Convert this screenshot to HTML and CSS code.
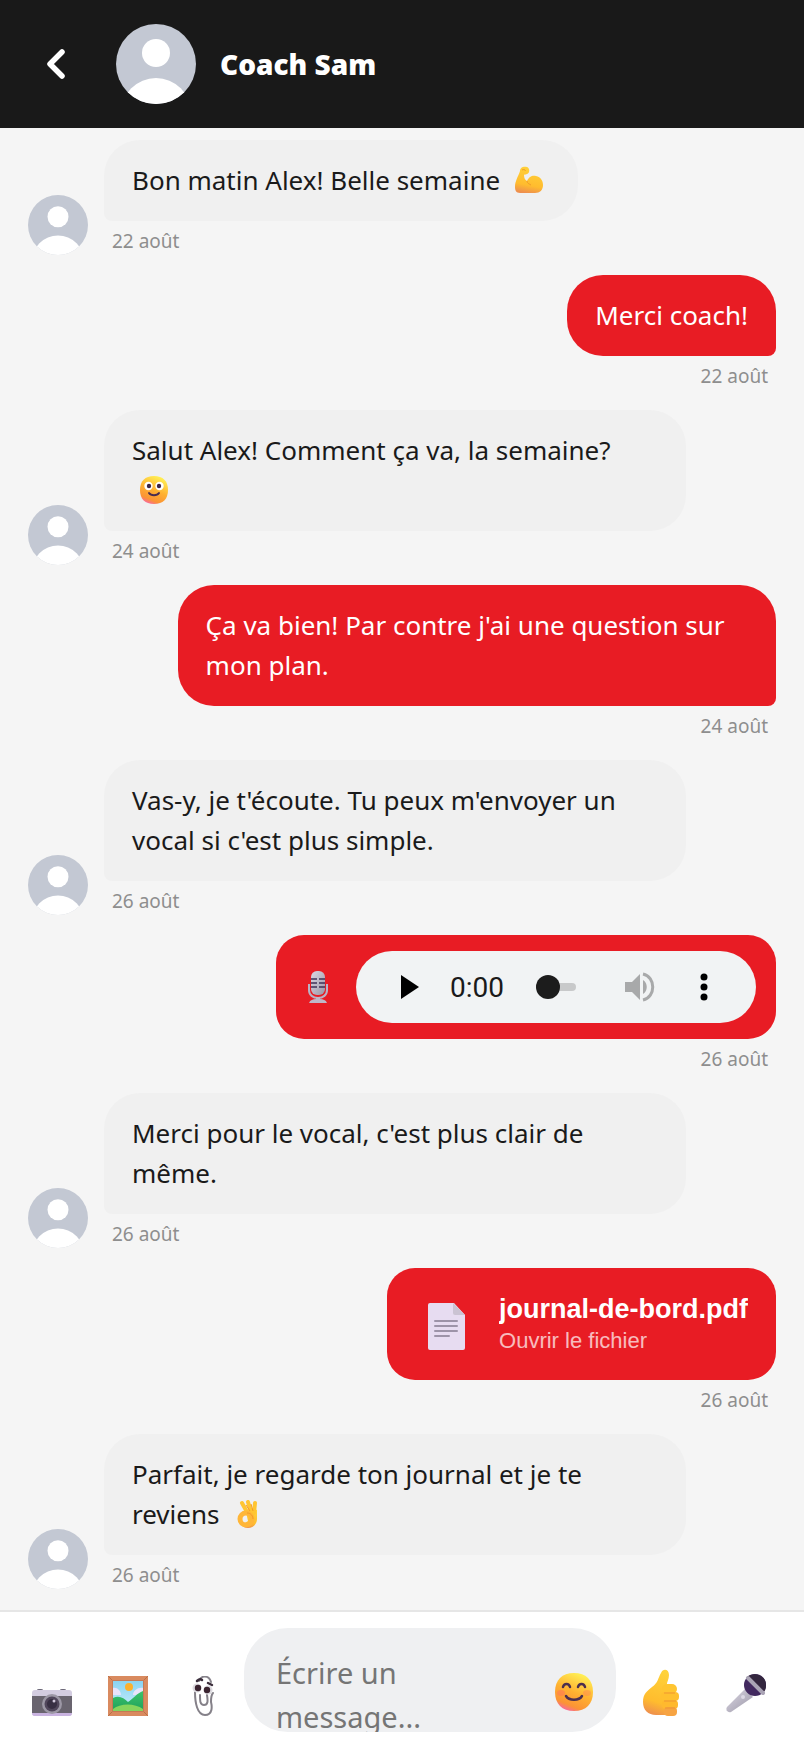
FILE: index.html
```html
<!DOCTYPE html>
<html lang="fr">
<head>
  <meta charset="UTF-8" />
  <meta name="viewport" content="width=device-width, initial-scale=1" />
  <title>Coach Sam</title>
  <link rel="stylesheet" href="styles.css">
</head>
<body>

  <!-- shared icons -->
  <svg class="sprite" width="0" height="0" aria-hidden="true">
    <defs>
      <clipPath id="avatar-clip"><circle cx="40" cy="40" r="40" /></clipPath>
      <linearGradient id="skin" x1="0.6" y1="0" x2="0.4" y2="1">
        <stop offset="0" stop-color="#ffd23a" />
        <stop offset="0.7" stop-color="#ffbc2e" />
        <stop offset="1" stop-color="#ee8f4e" />
      </linearGradient>
      <linearGradient id="face" x1="0.75" y1="0.05" x2="0.35" y2="1">
        <stop offset="0" stop-color="#fff055" />
        <stop offset="0.5" stop-color="#ffb131" />
        <stop offset="0.85" stop-color="#fb9335" />
        <stop offset="1" stop-color="#f96a9a" />
      </linearGradient>
      <linearGradient id="metal" x1="0" y1="0" x2="1" y2="1">
        <stop offset="0" stop-color="#dcd8e4" />
        <stop offset="1" stop-color="#9a96a6" />
      </linearGradient>
      <linearGradient id="sky" x1="0" y1="0" x2="0" y2="1">
        <stop offset="0" stop-color="#8ad4f2" />
        <stop offset="1" stop-color="#c9eefc" />
      </linearGradient>
      <linearGradient id="hill" x1="0" y1="0" x2="0" y2="1">
        <stop offset="0" stop-color="#3cc46a" />
        <stop offset="1" stop-color="#1fa05c" />
      </linearGradient>
      <symbol id="avatar" viewBox="0 0 80 80">
        <g clip-path="url(#avatar-clip)">
          <rect width="80" height="80" fill="#c3c8d3" />
          <circle cx="40" cy="29" r="14" fill="#fff" />
          <circle cx="40" cy="89" r="35" fill="#fff" />
        </g>
      </symbol>
    </defs>
  </svg>

  <header class="chat-header">
    <button class="back" type="button" aria-label="Retour">
      <svg width="32" height="32" viewBox="0 0 32 32"><path d="M22 4 10 16l12 12" fill="none" stroke="#fff" stroke-width="5.5" stroke-linecap="round" stroke-linejoin="round" /></svg>
    </button>
    <svg class="header-avatar"><use href="#avatar" /></svg>
    <h1>Coach Sam</h1>
  </header>

  <main class="messages">

    <div class="row">
      <svg class="avatar"><use href="#avatar" /></svg>
      <div class="content">
        <p class="bubble">Bon matin Alex! Belle semaine <svg class="emoji" viewBox="0 0 28 28"><path d="M5 5C5 1 9 0 12 1c3 1 3 6 0 7-2 1-2 0-3 1 0 3 1 5 3 6 2-5 6-6 9-5 5 1 7 5 7 9 0 5-3 8-8 8H5c-4 0-5-3-5-6C0 15 3 11 5 5z" fill="url(#skin)" /><path d="M7 4c2-1 4 0 3 1M12 15c0 2 2 3 4 4" fill="none" stroke="#f09a2c" /></svg></p>
        <time class="date">22 août</time>
      </div>
    </div>

    <div class="row mine">
      <div class="content">
        <p class="bubble">Merci coach!</p>
        <time class="date">22 août</time>
      </div>
    </div>

    <div class="row">
      <svg class="avatar"><use href="#avatar" /></svg>
      <div class="content">
        <p class="bubble">Salut Alex! Comment ça va, la semaine? <svg class="emoji" viewBox="0 0 28 28"><path d="M14 0c9 0 14 5 14 14s-5 14-14 14S0 23 0 14 5 0 14 0z" fill="url(#face)" /><circle cx="8.5" cy="10" r="4.2" fill="#fff" /><circle cx="19.5" cy="10" r="4.2" fill="#fff" /><circle cx="9" cy="10" r="2.2" fill="#3c2548" /><circle cx="19" cy="10" r="2.2" fill="#3c2548" /><path d="M9 17c2 3 8 3 10 0" fill="none" stroke="#4a2d50" stroke-width="2" stroke-linecap="round" /></svg></p>
        <time class="date">24 août</time>
      </div>
    </div>

    <div class="row mine">
      <div class="content">
        <p class="bubble">Ça va bien! Par contre j'ai une question sur mon plan.</p>
        <time class="date">24 août</time>
      </div>
    </div>

    <div class="row">
      <svg class="avatar"><use href="#avatar" /></svg>
      <div class="content">
        <p class="bubble">Vas-y, je t'écoute. Tu peux m'envoyer un vocal si c'est plus simple.</p>
        <time class="date">26 août</time>
      </div>
    </div>

    <div class="row mine">
      <div class="content">
        <div class="voice">
          <svg class="voice-icon" viewBox="0 0 20 32"><path d="M1 13v6c0 5 4 8 9 8s9-3 9-8v-6" fill="none" stroke="#b9b2c4" stroke-width="2" /><rect x="3" y="0" width="14" height="24" rx="6" fill="url(#metal)" /><path d="M3 8h6M3 12h6M3 16h6M11 8h6M11 12h6M11 16h6" stroke="#3f3257" stroke-width="1.5" /><path d="M8 26h4v2c3 0 6 1 7 4H1c1-3 4-4 7-4z" fill="#beb8c9" /></svg>
          <div class="player">
            <button class="play" type="button" aria-label="Lecture">
              <svg width="18" height="24" viewBox="0 0 18 24"><path d="M0 0v24l18-12z" /></svg>
            </button>
            <span class="time">0:00</span>
            <input class="seek" type="range" min="0" max="100" value="0" aria-label="Position">
            <button class="volume" type="button" aria-label="Volume">
              <svg width="30" height="30" viewBox="0 0 30 30"><path d="M0 10v10h7l8 8V2l-8 8z" fill="#a8a9aa" /><path d="M18 8v14c5-3 5-11 0-14z" fill="#a8a9aa" /><path d="M18 2c13 3 13 23 0 26" fill="none" stroke="#a8a9aa" stroke-width="3" /></svg>
            </button>
            <button class="more" type="button" aria-label="Plus d'options">
              <svg width="8" height="28" viewBox="0 0 8 28"><circle cx="4" cy="4" r="3.5" /><circle cx="4" cy="14" r="3.5" /><circle cx="4" cy="24" r="3.5" /></svg>
            </button>
          </div>
        </div>
        <time class="date">26 août</time>
      </div>
    </div>

    <div class="row">
      <svg class="avatar"><use href="#avatar" /></svg>
      <div class="content">
        <p class="bubble">Merci pour le vocal, c'est plus clair de même.</p>
        <time class="date">26 août</time>
      </div>
    </div>

    <div class="row mine">
      <div class="content">
        <a class="file" href="#">
          <svg class="file-icon" viewBox="0 0 64 56"><path d="M15 7h24l11 12v33q0 2-2 2H15q-2 0-2-2V9q0-2 2-2z" fill="#e7dcf1" /><path d="M38 7v10q0 2 2 2h10z" fill="#cbc3d3" /><path d="M20 25h22M20 30h22M20 35h22M20 40h14" stroke="#9d93a8" stroke-width="2" stroke-linecap="round" /></svg>
          <span class="file-text">
            <strong>journal-de-bord.pdf</strong>
            <small>Ouvrir le fichier</small>
          </span>
        </a>
        <time class="date">26 août</time>
      </div>
    </div>

    <div class="row">
      <svg class="avatar"><use href="#avatar" /></svg>
      <div class="content">
        <p class="bubble">Parfait, je regarde ton journal et je te reviens <svg class="emoji" viewBox="0 0 28 28"><path d="M12 12c2-2 8-4 11-2v9c0 5-4 9-9 9-3 0-5-1-6-3l6-4z" fill="url(#skin)" /><path d="M8 3l5 9M14 2l3 10M21 3l-1 10" fill="none" stroke="#ffc531" stroke-width="4" stroke-linecap="round" /><circle cx="12" cy="19" r="6" fill="none" stroke="#ffb638" stroke-width="5" /><path d="M12 5l4 6M17 4l2 7M13 13c4 0 6 3 6 6" fill="none" stroke="#f39a27" /></svg></p>
        <time class="date">26 août</time>
      </div>
    </div>

  </main>

  <form class="composer">
    <button class="tool" type="button" aria-label="Appareil photo">
      <svg width="40" height="40" viewBox="0 0 40 40"><path d="M5 14q0-1 2-1h2q2 0 2 1zM28 14q0-1 2-1h2q2 0 2 1z" fill="#6d6878" /><rect y="14" width="40" height="26" rx="3" fill="#d3cce0" /><rect y="20" width="40" height="17" fill="#69646f" /><path d="M0 37h40q0 3-3 3H3q-3 0-3-3z" fill="#c9b3e0" /><circle cx="20" cy="28" r="10" fill="#9c97a5" /><circle cx="20" cy="28" r="7.5" fill="#51475c" /><circle cx="20" cy="28" r="5" fill="#382f43" /><circle cx="22" cy="25" r="1.5" fill="#cfc6da" /></svg>
    </button>
    <button class="tool" type="button" aria-label="Image">
      <svg width="40" height="40" viewBox="0 0 40 40"><rect width="40" height="40" fill="#d98a5f" /><path d="M0 0l5 5M40 0l-5 5M0 40l5-5M40 40l-5-5" stroke="#b97048" /><rect x="4" y="4" width="32" height="32" fill="#c57a55" /><rect x="5" y="5" width="30" height="30" fill="url(#sky)" /><path d="M5 12c4-1 8 3 8 7H5zM35 12c-5-1-10 3-10 7h10z" fill="#e9e3fb" /><circle cx="21" cy="11" r="4" fill="#fbb02d" /><path d="M5 22c6-3 11 0 15 4 5-3 9-9 15-11v20H5z" fill="url(#hill)" /><path d="M5 33c7-6 22-6 30 0v2H5z" fill="#86d45c" /></svg>
    </button>
    <button class="tool" type="button" aria-label="Joindre un fichier">
      <svg width="40" height="40" viewBox="0 0 40 40"><path d="M15 5c2-6 10-6 12 1M11 16c0 10 2 23 10 23 8 0 7-9 6-13 0-4 0-7 2-9M16 19c0 6 0 10 4 10s4-4 3-10" fill="none" stroke="#858189" stroke-width="2" stroke-linecap="round" /><circle cx="13" cy="12" r="4.5" fill="#dddbe0" /><circle cx="24" cy="14" r="4.5" fill="#dddbe0" /><circle cx="14" cy="12" r="3.2" fill="#3b2430" /><circle cx="23" cy="14" r="3.2" fill="#3b2430" /><path d="M13 5c2-2 4-2 5-1M24 7l4 2" stroke="#3b2e3c" stroke-width="2.5" fill="none" stroke-linecap="round" /></svg>
    </button>
    <div class="field">
      <textarea rows="2" placeholder="Écrire un message..." aria-label="Écrire un message"></textarea>
      <button class="smile" type="button" aria-label="Émojis">
        <svg width="38" height="38" viewBox="0 0 38 38"><path d="M19 0c12 0 19 7 19 19s-7 19-19 19S0 31 0 19 7 0 19 0z" fill="url(#face)" /><ellipse cx="6" cy="20" rx="4" ry="3" fill="#ff7a55" opacity="0.6" /><ellipse cx="32" cy="20" rx="4" ry="3" fill="#ff7a55" opacity="0.4" /><path d="M8 14c1-4 6-4 7 0M23 14c1-4 6-4 7 0M11 23c3 5 13 5 16 0" fill="none" stroke="#4c2f4e" stroke-width="2.5" stroke-linecap="round" /></svg>
      </button>
    </div>
    <button class="send" type="button" aria-label="J'aime">
      <svg width="38" height="54" viewBox="0 0 38 54"><path d="M19 4c2-5 8-4 8 2 0 5-3 8-2 11-2 10-2 18-2 29H14C6 46 1 41 1 33c0-8 4-11 9-15 6-4 6-9 9-14z" fill="url(#skin)" /><rect x="20" y="15" width="15" height="10" rx="5" fill="#ffc531" /><rect x="19" y="23" width="18" height="9" rx="4" fill="#ffc02f" /><rect x="20" y="31" width="16" height="9" rx="4" fill="#ffb92e" /><rect x="22" y="38" width="13" height="9" rx="4" fill="#f7a443" /><path d="M22 24h11M22 32h12M23 39h10" stroke="#ef9633" /></svg>
    </button>
    <button class="send" type="button" aria-label="Message vocal">
      <svg width="42" height="44" viewBox="0 0 42 44"><path d="M19 15l8 8L5 38c-3 1-6-2-4-5z" fill="url(#metal)" /><circle cx="29" cy="11" r="11" fill="#42295f" /><path d="M21 3c7-6 19-2 19 8 0 4-1 6-3 8z" fill="#33263e" /><path d="M22 4l15 15" stroke="#aaa4b5" stroke-width="4" stroke-linecap="round" /><circle cx="17" cy="23" r="2" fill="#dcd8e4" /></svg>
    </button>
  </form>

</body>
</html>
```
FILE: styles.css
```css
* {
  box-sizing: border-box;
}

body {
  display: flex;
  flex-direction: column;
  min-height: 100vh;
  margin: 0;
  background: #f5f5f5;
  color: #1a1a1a;
  font-family: "Segoe UI", "Noto Sans", sans-serif;
}

button {
  display: flex;
  align-items: center;
  justify-content: center;
  padding: 0;
  border: none;
  background: none;
  cursor: pointer;
}

.sprite {
  position: absolute;
}

/* header */
.chat-header {
  display: flex;
  align-items: center;
  gap: 24px;
  padding: 24px 20px;
  background: #191919;
  color: #fff;
}

.back {
  width: 72px;
  height: 72px;
}

.header-avatar {
  width: 80px;
  height: 80px;
}

.chat-header h1 {
  margin: 0;
  font-family: "Segoe UI", "Open Sans", sans-serif;
  font-size: 28px;
  line-height: 40px;
  font-weight: 800;
}

/* messages */
.messages {
  flex: 1;
  display: flex;
  flex-direction: column;
  gap: 20px;
  padding: 12px 28px 20px;
}

.row {
  display: flex;
  align-items: flex-end;
  gap: 16px;
}

.avatar {
  flex: none;
  width: 60px;
  height: 60px;
}

.content {
  display: flex;
  flex-direction: column;
  align-items: flex-start;
  max-width: calc(80% - 16px);
}

.mine {
  justify-content: flex-end;
}

.mine .content {
  align-items: flex-end;
  max-width: 80%;
}

.bubble {
  margin: 0;
  padding: 20px 28px 21px;
  border-radius: 36px 36px 36px 8px;
  background: #f0f0f0;
  font-size: 26px;
  line-height: 40px;
}

.mine .bubble {
  border-radius: 36px 36px 8px 36px;
  background: #e81c24;
  color: #fff;
}

.emoji {
  width: 28px;
  height: 28px;
  margin: 0 7px 0 8px;
  vertical-align: -4px;
}

.date {
  padding: 6px 8px 0;
  color: #8e8e8e;
  font-size: 19px;
  line-height: 28px;
}

/* voice message */
.voice {
  display: flex;
  align-items: center;
  gap: 28px;
  padding: 16px 20px 16px 32px;
  border-radius: 28px;
  background: #e81c24;
}

.voice-icon {
  width: 20px;
  height: 32px;
}

.player {
  display: flex;
  align-items: center;
  width: 400px;
  height: 72px;
  padding: 0 48px 0 45px;
  border-radius: 36px;
  background: #f1f3f4;
}

.time {
  margin: 0 32px 0 31px;
  font-family: Roboto, sans-serif;
  font-size: 28px;
}

.seek {
  appearance: none;
  width: 40px;
  height: 24px;
  margin: 0 49px 0 0;
  background: none;
}

.seek::-webkit-slider-runnable-track {
  height: 8px;
  border-radius: 4px;
  background: #c8c9ca;
}

.seek::-webkit-slider-thumb {
  appearance: none;
  width: 24px;
  height: 24px;
  margin-top: -8px;
  border-radius: 50%;
  background: #1c1c1c;
}

.more {
  margin-left: auto;
}

/* file message */
.file {
  display: flex;
  align-items: center;
  gap: 20px;
  padding: 25px 28px;
  border-radius: 28px;
  background: #e81c24;
  color: #fff;
  font-family: "Liberation Sans", Arial, sans-serif;
  text-decoration: none;
}

.file-icon {
  width: 64px;
  height: 56px;
}

.file-text {
  display: flex;
  flex-direction: column;
  gap: 2px;
}

.file strong {
  overflow: hidden;
  font-size: 27px;
  line-height: 32px;
}

.file small {
  font-size: 22px;
  line-height: 28px;
  opacity: 0.7;
}

/* composer */
.composer {
  display: flex;
  align-items: flex-end;
  gap: 4px;
  padding: 16px;
  border-top: 2px solid #e6e6e6;
  background: #fff;
}

.tool {
  width: 72px;
  height: 72px;
}

.send {
  width: 82px;
  height: 72px;
}

.field {
  flex: 1;
  display: flex;
  align-items: flex-end;
  gap: 24px;
  min-width: 0;
  height: 104px;
  padding: 0 20px 0 32px;
  border-radius: 44px;
  background: #eff0f2;
}

.field textarea {
  flex: 1;
  min-width: 0;
  height: 104px;
  padding: 23px 0 0;
  border: none;
  outline: none;
  resize: none;
  overflow: hidden;
  background: none;
  font-family: inherit;
  font-size: 29px;
  line-height: 44px;
}

.field textarea::placeholder {
  color: #757575;
}

.smile {
  width: 44px;
  height: 80px;
}
```
